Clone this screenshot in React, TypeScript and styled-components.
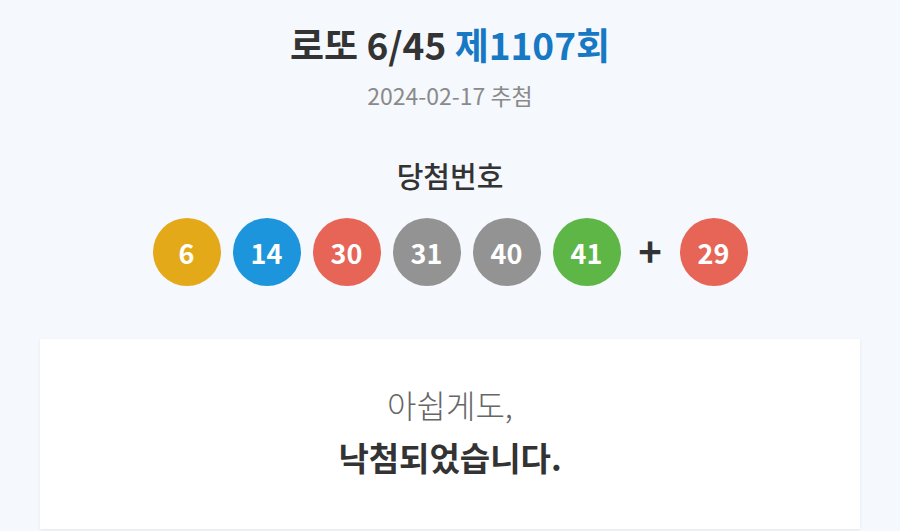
import styled, { createGlobalStyle } from "styled-components";

const GlobalStyle = createGlobalStyle`
  html, body {
    margin: 0;
    padding: 0;
    background: #f5f8fd;
    font-family: "Noto Sans CJK KR", "Noto Sans", sans-serif;
    color: #333;
  }
`;

const ballColors = {
  yellow: "#e4a918",
  blue: "#1c95dc",
  red: "#e76557",
  gray: "#939393",
  green: "#5db645",
};

type BallColor = keyof typeof ballColors;

function colorOf(n: number): BallColor {
  if (n <= 10) return "yellow";
  if (n <= 20) return "blue";
  if (n <= 30) return "red";
  if (n <= 40) return "gray";
  return "green";
}

const draw = {
  round: 1107,
  date: "2024-02-17",
  numbers: [6, 14, 30, 31, 40, 41],
  bonus: 29,
};

export default function App() {
  return (
    <Page>
      <GlobalStyle />
      <Header>
        <Title>
          로또 6/45 <Round>제{draw.round}회</Round>
        </Title>
        <DrawDate>{draw.date} 추첨</DrawDate>
      </Header>

      <Section>
        <SectionTitle>당첨번호</SectionTitle>
        <Balls>
          {draw.numbers.map((n) => (
            <Ball key={n} $color={colorOf(n)}>
              {n}
            </Ball>
          ))}
          <Plus>+</Plus>
          <Ball $color={colorOf(draw.bonus)}>{draw.bonus}</Ball>
        </Balls>
      </Section>

      <ResultCard>
        <Sorry>아쉽게도,</Sorry>
        <ResultText>낙첨되었습니다.</ResultText>
      </ResultCard>
    </Page>
  );
}

const Page = styled.div`
  display: flex;
  flex-direction: column;
  align-items: center;
  padding: 20px 40px 2px;
  min-height: 100vh;
  box-sizing: border-box;
`;

const Header = styled.header`
  display: flex;
  flex-direction: column;
  align-items: center;
`;

const Title = styled.h1`
  margin: 0;
  font-size: 37px;
  font-weight: 700;
  line-height: 48px;
  color: #333;
`;

const Round = styled.span`
  color: #1779c3;
`;

const DrawDate = styled.div`
  margin-top: 12px;
  font-size: 23px;
  line-height: 30px;
  color: #8a8a8a;
`;

const Section = styled.section`
  display: flex;
  flex-direction: column;
  align-items: center;
  margin-top: 47px;
`;

const SectionTitle = styled.h2`
  margin: 0;
  font-size: 29px;
  font-weight: 500;
  line-height: 36px;
  color: #333;
`;

const Balls = styled.div`
  display: flex;
  align-items: center;
  gap: 12px;
  margin-top: 25px;
`;

const Ball = styled.div<{ $color: BallColor }>`
  width: 68px;
  height: 68px;
  border-radius: 50%;
  background: ${(p) => ballColors[p.$color]};
  color: #fff;
  display: flex;
  align-items: center;
  justify-content: center;
  font-size: 27px;
  font-weight: 700;
`;

const Plus = styled.div`
  width: 35px;
  text-align: center;
  font-size: 40px;
  font-weight: 700;
  color: #333;
  line-height: 1;
  padding-bottom: 4px;
`;

const ResultCard = styled.div`
  align-self: stretch;
  margin-top: 53px;
  height: 190px;
  background: #fff;
  box-shadow: 0 1px 3px rgba(0, 0, 0, 0.08);
  display: flex;
  flex-direction: column;
  align-items: center;
  padding-top: 45px;
  box-sizing: border-box;
`;

const Sorry = styled.div`
  font-size: 32px;
  font-weight: 300;
  color: #666;
  line-height: 40px;
`;

const ResultText = styled.div`
  margin-top: 12px;
  font-size: 33px;
  font-weight: 700;
  color: #333;
  line-height: 42px;
`;
